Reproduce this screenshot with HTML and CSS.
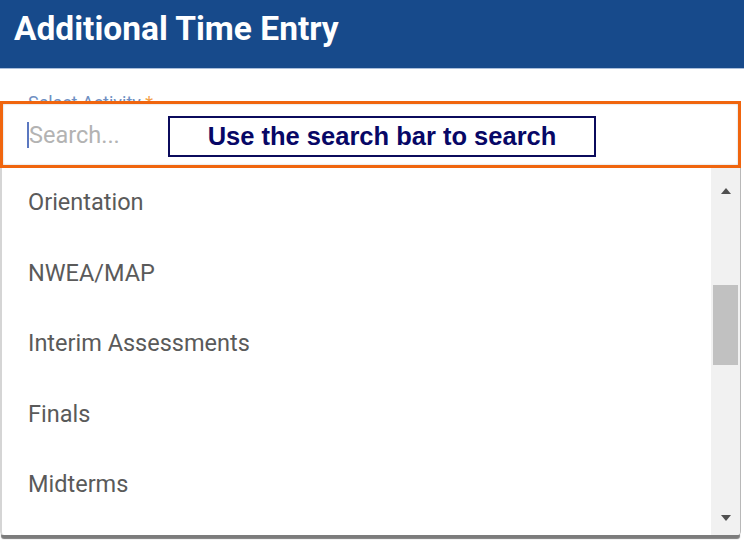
FILE: index.html
```html
<!DOCTYPE html>
<html lang="en">
<head>
    <meta charset="UTF-8">
    <title>Additional Time Entry</title>
    <link rel="stylesheet" href="styles.css">
</head>
<body>
    <header class="page-header">
        <h1>Additional Time Entry</h1>
    </header>
    <main class="form">
        <label class="field-label">Select Activity <span class="req">*</span></label>
        <div class="select-field"></div>

        <!-- open dropdown, lies over the field -->
        <div class="dropdown">
            <div class="search-box">
                <span class="caret"></span>
                <input type="text" class="search-input" placeholder="Search...">
                <div class="callout">Use the search bar to search</div>
            </div>
            <div class="options">
                <ul class="option-list">
                    <li>Orientation</li>
                    <li>NWEA/MAP</li>
                    <li>Interim Assessments</li>
                    <li>Finals</li>
                    <li>Midterms</li>
                </ul>
                <div class="scrollbar">
                    <span class="arrow up"></span>
                    <div class="track">
                        <div class="thumb"></div>
                    </div>
                    <span class="arrow down"></span>
                </div>
            </div>
        </div>
    </main>
</body>
</html>
```

FILE: styles.css
```css
*{
    margin: 0;
    padding: 0;
    box-sizing: border-box;
}
body{
    width: 744px;
    height: 541px;
    overflow: hidden;
    background: #fff;
    font-family: Roboto, "Liberation Sans", Arial, sans-serif;
}
.page-header{
    height: 69px;
    background: #174a8b;
    border-bottom: 1px solid #a9bedb;
    padding: 12px 0 0 14px;
}
.page-header h1{
    color: #fff;
    font-size: 33.5px;
    line-height: 34px;
    font-weight: 700;
}
.form{
    position: relative;
    height: 472px;
    padding: 25px 0 0 28px;
}
.field-label{
    display: block;
    font-size: 18px;
    line-height: 18px;
    color: #6f8fc2;
}
.field-label .req{
    color: #f3a04a;
}
.select-field{
    margin-top: 10px;
    width: 690px;
    height: 40px;
    border-bottom: 1px solid #ccc;
}
.dropdown{
    position: absolute;
    top: 32px;
    left: 0;
    width: 741px;
    background: #fff;
    border-radius: 0 0 4px 4px;
    box-shadow: 0 5px 1px -1px #7c7c7c;
}
.search-box{
    height: 67px;
    border: 3px solid #f0650e;
    box-shadow: inset 0 0 2px #bdbdbd;
    display: flex;
    align-items: center;
    padding-left: 24px;
}
.caret{
    width: 2px;
    height: 26px;
    background: #5b78c0;
}
.search-input{
    width: 139px;
    border: none;
    outline: none;
    background: transparent;
    font-family: Roboto, "Liberation Sans", Arial, sans-serif;
    font-size: 23.5px;
    color: #555;
}
.search-input::placeholder{
    color: #b3b3b3;
}
.callout{
    margin-top: 4px;
    width: 428px;
    height: 41px;
    border: 2px solid #0b0b5c;
    font-family: "Liberation Sans", Arial, sans-serif;
    font-weight: 700;
    font-size: 25.5px;
    line-height: 37px;
    color: #070766;
    text-align: center;
}
.options{
    display: flex;
    height: 367px;
    overflow: hidden;
    border-left: 2px solid #d5d5d5;
    border-right: 1px solid #b8b8b8;
    border-radius: 0 0 4px 4px;
}
.option-list{
    flex: 1;
    list-style: none;
    margin-top: -1px;
}
.option-list li{
    height: 70.6px;
    line-height: 70.6px;
    padding-left: 26px;
    font-size: 23.5px;
    color: #5a5a5a;
}
.scrollbar{
    width: 29px;
    background: #f1f1f1;
    display: flex;
    flex-direction: column;
    align-items: center;
}
.arrow{
    width: 0;
    height: 0;
    border-left: 5px solid transparent;
    border-right: 5px solid transparent;
}
.arrow.up{
    margin-top: 20px;
    border-bottom: 6px solid #505050;
}
.arrow.down{
    margin-bottom: 14px;
    border-top: 6px solid #505050;
}
.track{
    flex: 1;
    width: 100%;
    padding: 91px 2px 0;
}
.thumb{
    height: 80px;
    background: #c1c1c1;
}
```
